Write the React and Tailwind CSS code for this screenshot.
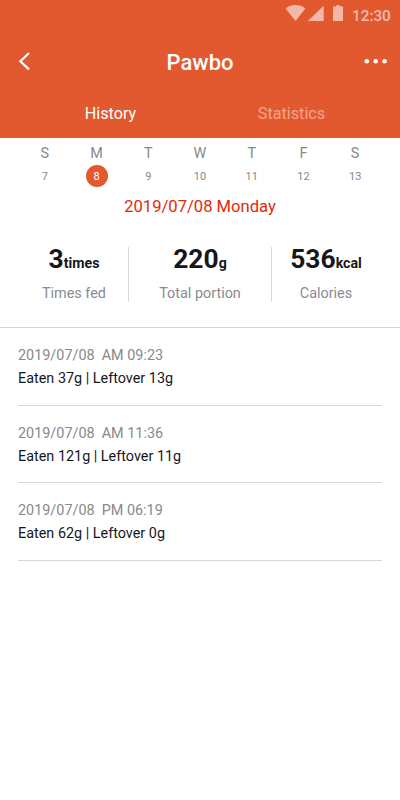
const week = [
  { name: 'S', date: 7 },
  { name: 'M', date: 8 },
  { name: 'T', date: 9 },
  { name: 'W', date: 10 },
  { name: 'T', date: 11 },
  { name: 'F', date: 12 },
  { name: 'S', date: 13 },
];

const stats = [
  { value: 3, unit: 'times', label: 'Times fed' },
  { value: 220, unit: 'g', label: 'Total portion' },
  { value: 536, unit: 'kcal', label: 'Calories' },
];

const meals = [
  { date: '2019/07/08', time: 'AM 09:23', eaten: 37, leftover: 13 },
  { date: '2019/07/08', time: 'AM 11:36', eaten: 121, leftover: 11 },
  { date: '2019/07/08', time: 'PM 06:19', eaten: 62, leftover: 0 },
];

function StatusBar() {
  return (
    <div className="flex h-7 items-start pl-[285px] pt-[5px] text-[#f3b9a7]">
      <svg width="58" height="17" viewBox="0 0 58 17" fill="currentColor">
        <path d="M.6 3.400C6-1.100 15-1.100 20.400 3.400L10.500 16z" />
        <path d="M38.700 .8V16H22.900z" />
        <path d="M51 .2h4.200v1.400h3V16H48V1.600h3z" />
      </svg>
      <span className="ml-[9px] mt-[2px] text-[15.300px] font-medium leading-[18px]">12:30</span>
    </div>
  );
}

function Header({ title }) {
  return (
    <header className="h-[137.500px] bg-[#e25930] text-white">
      <StatusBar />
      <div className="flex h-[66px] items-center justify-between pl-[18px] pr-[12px]">
        <button type="button" aria-label="Back" className="w-[30px]">
          <svg width="13" height="20" viewBox="0 0 13 20" fill="none" stroke="currentColor" strokeWidth="2.200">
            <path d="M11 2 2.400 10.200 11 18.400" />
          </svg>
        </button>
        <h1 className="pt-[3px] text-[22px] font-medium">{title}</h1>
        <button type="button" aria-label="More" className="flex w-[36px] justify-end">
          <svg width="24" height="6" viewBox="0 0 24 6" fill="currentColor">
            <circle cx="2.800" cy="3.200" r="2.300" />
            <circle cx="11.700" cy="3.200" r="2.300" />
            <circle cx="20.600" cy="3.200" r="2.300" />
          </svg>
        </button>
      </div>
      <nav className="grid grid-cols-[181px_181px] px-5 pt-[9px] text-center text-[16.200px] leading-[22px]">
        <span>History</span>
        <span className="text-[#f0a58e]">Statistics</span>
      </nav>
    </header>
  );
}

function WeekPicker({ selected }) {
  return (
    <div className="grid grid-cols-7 px-[19px] pt-[5px] text-center text-[#88888d]">
      {week.map((day) => (
        <div key={day.date} className="flex flex-col items-center">
          <span className="pt-px text-[14.400px] leading-[19px]">{day.name}</span>
          <span
            className={`mt-[2.500px] flex h-[22px] w-[22px] items-center justify-center rounded-full pt-[3px] text-[11px] ${
              day.date === selected ? 'bg-[#e25930] text-white' : ''
            }`}
          >
            {day.date}
          </span>
        </div>
      ))}
    </div>
  );
}

export default function App() {
  return (
    <div className="h-[800px] w-[400px] overflow-hidden bg-white font-[Roboto,sans-serif] text-[#17171a]">
      <Header title="Pawbo" />

      <section className="h-[190px] border-b border-[#d4d4d6]">
        <WeekPicker selected={8} />
        <p className="mt-[7.500px] text-center text-[16.600px] leading-6 text-[#df2a08]">2019/07/08 Monday</p>
        <div className="mt-[28px] grid h-[55px] grid-cols-[108px_144px_108px] justify-center text-center">
          {stats.map((stat, i) => (
            <div key={stat.label} className={i === 1 ? 'border-x border-[#d8d8da]' : ''}>
              <p className="whitespace-nowrap leading-6">
                <span className="text-[26.400px] font-bold">{stat.value}</span>
                <span className="text-[14.200px] font-bold">{stat.unit}</span>
              </p>
              <p className="mt-[10px] whitespace-nowrap text-[14.400px] leading-[17px] text-[#8b8b90]">{stat.label}</p>
            </div>
          ))}
        </div>
      </section>

      <ul className="px-[18px] pt-[0.600px]">
        {meals.map((meal) => (
          <li key={meal.time} className="h-[77.700px] border-b border-[#d8d8da] pt-[18px]">
            <p className="whitespace-pre text-[14.400px] leading-5 text-[#88888d]">{`${meal.date}  ${meal.time}`}</p>
            <p className="mt-[3px] text-[14.400px] leading-5">
              Eaten {meal.eaten}g | Leftover {meal.leftover}g
            </p>
          </li>
        ))}
      </ul>
    </div>
  );
}
